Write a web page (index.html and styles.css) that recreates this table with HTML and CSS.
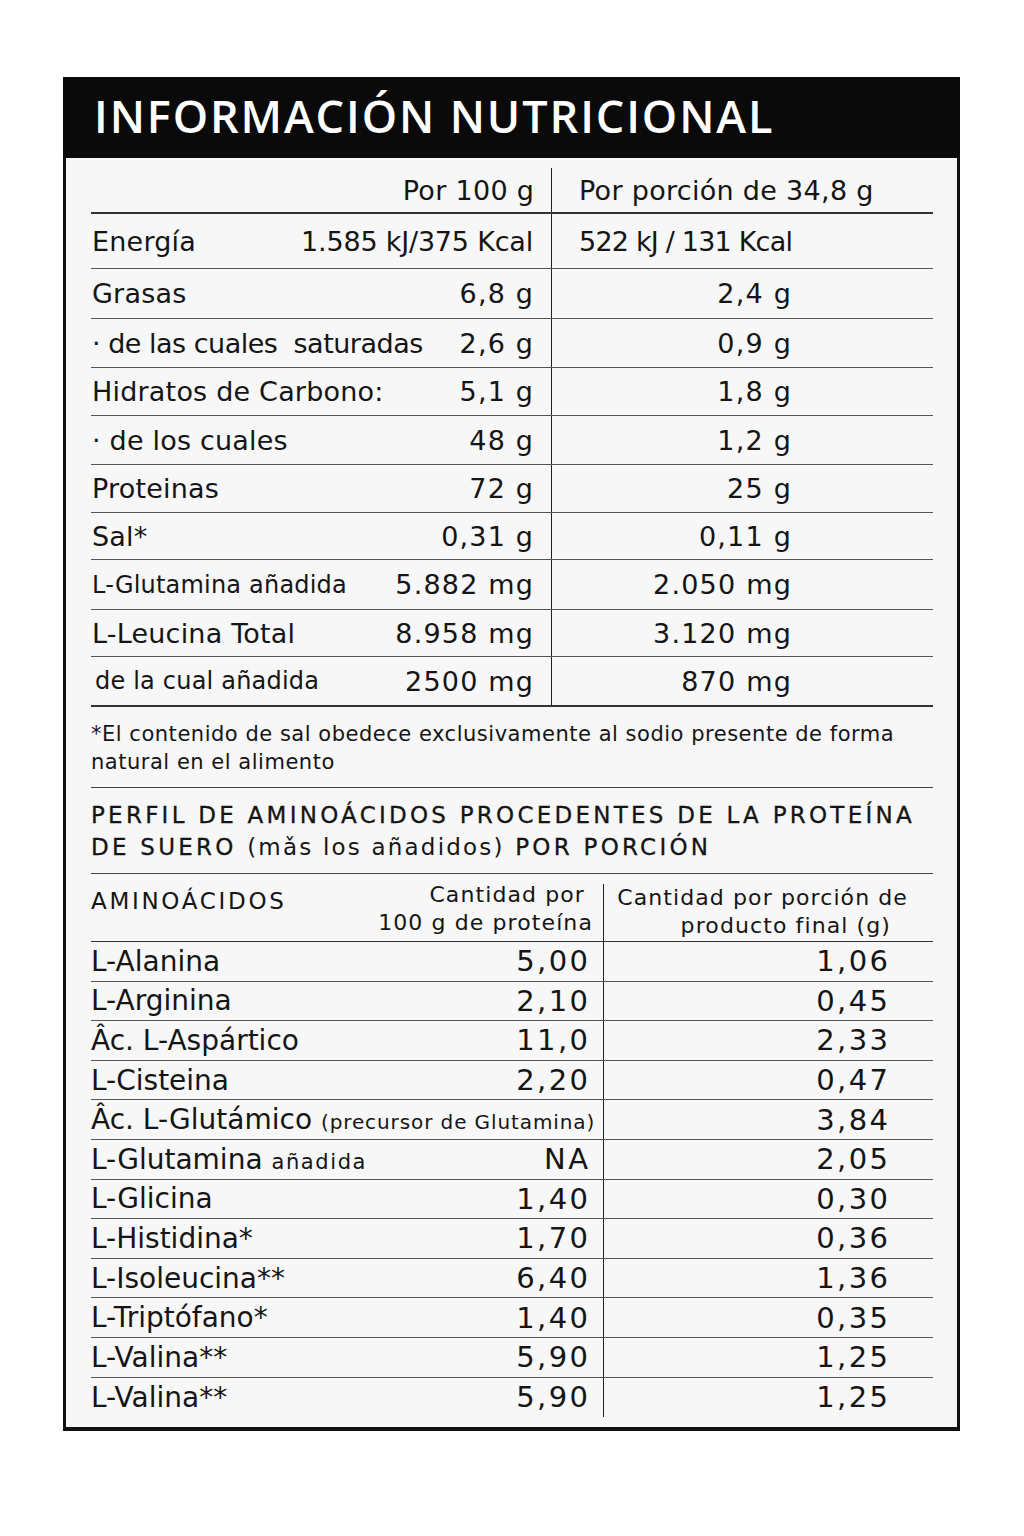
FILE: index.html
```html
<!DOCTYPE html>
<html lang="es">
<head>
<meta charset="utf-8">
<title>Información nutricional</title>
<link rel="stylesheet" href="styles.css">
</head>
<body>
<div class="label">
  <div class="title-bar"><h1>INFORMACIÓN NUTRICIONAL</h1></div>
  <div class="content">
    <div class="nt">
      <div class="row head">
        <div class="c1"><span></span><span class="v">Por 100 g</span></div>
        <div class="c2 left">Por porción de 34,8 g</div>
      </div>
      <div class="row r-first">
        <div class="c1"><span>Energía</span><span class="v tight">1.585 kJ/375 Kcal</span></div>
        <div class="c2 left narrow">522 kJ / 131 Kcal</div>
      </div>
      <div class="row h50">
        <div class="c1"><span>Grasas</span><span class="v">6,8 g</span></div>
        <div class="c2">2,4 g</div>
      </div>
      <div class="row h49">
        <div class="c1"><span class="sat">· de las cuales&nbsp; saturadas</span><span class="v">2,6 g</span></div>
        <div class="c2">0,9 g</div>
      </div>
      <div class="row h48">
        <div class="c1"><span>Hidratos de Carbono:</span><span class="v">5,1 g</span></div>
        <div class="c2">1,8 g</div>
      </div>
      <div class="row h49">
        <div class="c1"><span>· de los cuales</span><span class="v">48 g</span></div>
        <div class="c2">1,2 g</div>
      </div>
      <div class="row h48">
        <div class="c1"><span>Proteinas</span><span class="v">72 g</span></div>
        <div class="c2">25 g</div>
      </div>
      <div class="row h47">
        <div class="c1"><span>Sal*</span><span class="v">0,31 g</span></div>
        <div class="c2">0,11 g</div>
      </div>
      <div class="row sm h50">
        <div class="c1"><span>L-Glutamina añadida</span><span class="v">5.882 mg</span></div>
        <div class="c2">2.050 mg</div>
      </div>
      <div class="row h47">
        <div class="c1"><span>L-Leucina Total</span><span class="v">8.958 mg</span></div>
        <div class="c2">3.120 mg</div>
      </div>
      <div class="row sm last">
        <div class="c1"><span class="ind">de la cual añadida</span><span class="v">2500 mg</span></div>
        <div class="c2">870 mg</div>
      </div>
    </div>
    <p class="note">*El contenido de sal obedece exclusivamente al sodio presente de forma<br>natural en el alimento</p>
    <h2 class="profile">PERFIL DE AMINOÁCIDOS PROCEDENTES DE LA PROTEÍNA<br>DE SUERO <span class="lc">(mǎs los añadidos)</span> POR PORCIÓN</h2>
    <div class="at">
      <div class="arow ahead">
        <div class="a1"><span class="aname">AMINOÁCIDOS</span><span class="av"><span class="l1">Cantidad por</span><br>100 g de proteína</span></div>
        <div class="a2"><span class="h2l">Cantidad por porción de<br><span class="l2">producto final (g)</span></span></div>
      </div>
      <div class="arow"><div class="a1"><span>L-Alanina</span><span class="n">5,00</span></div><div class="a2"><span class="n">1,06</span></div></div>
      <div class="arow"><div class="a1"><span>L-Arginina</span><span class="n">2,10</span></div><div class="a2"><span class="n">0,45</span></div></div>
      <div class="arow"><div class="a1"><span>Âc. L-Aspártico</span><span class="n">11,0</span></div><div class="a2"><span class="n">2,33</span></div></div>
      <div class="arow"><div class="a1"><span>L-Cisteina</span><span class="n">2,20</span></div><div class="a2"><span class="n">0,47</span></div></div>
      <div class="arow"><div class="a1"><span>Âc. L-Glutámico <small class="paren">(precursor de Glutamina)</small></span><span></span></div><div class="a2"><span class="n">3,84</span></div></div>
      <div class="arow"><div class="a1"><span>L-Glutamina <small class="add">añadida</small></span><span class="n">NA</span></div><div class="a2"><span class="n">2,05</span></div></div>
      <div class="arow"><div class="a1"><span>L-Glicina</span><span class="n">1,40</span></div><div class="a2"><span class="n">0,30</span></div></div>
      <div class="arow"><div class="a1"><span>L-Histidina*</span><span class="n">1,70</span></div><div class="a2"><span class="n">0,36</span></div></div>
      <div class="arow"><div class="a1"><span>L-Isoleucina**</span><span class="n">6,40</span></div><div class="a2"><span class="n">1,36</span></div></div>
      <div class="arow"><div class="a1"><span>L-Triptófano*</span><span class="n">1,40</span></div><div class="a2"><span class="n">0,35</span></div></div>
      <div class="arow"><div class="a1"><span>L-Valina**</span><span class="n">5,90</span></div><div class="a2"><span class="n">1,25</span></div></div>
      <div class="arow alast"><div class="a1"><span>L-Valina**</span><span class="n">5,90</span></div><div class="a2"><span class="n">1,25</span></div></div>
    </div>
  </div>
</div>
</body>
</html>
```

FILE: styles.css
```css
html, body {
  margin: 0;
  padding: 0;
  background: #ffffff;
}
body {
  font-family: "DejaVu Sans", "Open Sans", sans-serif;
  color: #151515;
}
.label {
  margin: 77px 0 0 63px;
  width: 897px;
  box-sizing: border-box;
  border: 3px solid #111;
  border-top: 0;
  border-bottom: 4px solid #111;
  background: #f7f7f7;
}
.title-bar {
  background: #0a0a0a;
  height: 81px;
  box-sizing: border-box;
  margin: 0 -3px;
  padding: 16px 0 0 31px;
}
.title-bar h1 {
  margin: 0;
  font-family: "Open Sans", "DejaVu Sans", sans-serif;
  color: #fff;
  font-size: 45px;
  line-height: 45px;
  font-weight: 600;
  letter-spacing: 1.9px;
}
.content {
  padding: 10px 24px 10px 25px;
}
/* nutrition table */
.nt .row {
  display: grid;
  grid-template-columns: 460px 1fr;
  height: 49px;
  border-bottom: 1.5px solid #555;
  font-size: 27px;
  letter-spacing: 0.2px;
  box-sizing: border-box;
  white-space: nowrap;
}
.nt .row.head {
  height: 46px;
  border-bottom: 2px solid #333;
}
.nt .row.r-first { height: 55px; }
.nt .row.h50 { height: 50px; }
.nt .row.h49 { height: 49px; }
.nt .row.h48 { height: 48px; }
.nt .row.h47 { height: 47px; }
.nt .row.last {
  border-bottom: 2px solid #333;
  height: 50px;
}
.nt .c1 {
  display: flex;
  justify-content: space-between;
  align-items: center;
  padding: 0 18px 0 1px;
}
.nt .sat { letter-spacing: -0.5px; }
.nt .v {
  letter-spacing: 1.2px;
  margin-right: -1.2px;
}
.nt .v.tight {
  letter-spacing: -0.2px;
  margin-right: 0;
}
.nt .row.head .v { letter-spacing: 0.3px; }
.nt .c2 {
  display: flex;
  align-items: center;
  justify-content: flex-end;
  padding-right: 141px;
  border-left: 1.5px solid #222;
  letter-spacing: 1.2px;
}
.nt .c2.left {
  justify-content: flex-start;
  padding-left: 27px;
  padding-right: 0;
  letter-spacing: 0.3px;
}
.nt .c2.left.narrow { letter-spacing: -0.8px; }
.nt .row.sm .c1 > span:first-child {
  font-size: 24px;
  letter-spacing: 0.2px;
}
.nt .ind { padding-left: 3px; }
.note {
  margin: 0;
  padding: 13px 0 11px 0;
  font-size: 21px;
  line-height: 28px;
  letter-spacing: 0.52px;
  border-bottom: 1.5px solid #444;
  white-space: nowrap;
}
.profile {
  margin: 0;
  padding: 11px 0 10px 0;
  font-size: 23px;
  line-height: 32px;
  font-weight: 400;
  letter-spacing: 3.25px;
  border-bottom: 1.5px solid #444;
  white-space: nowrap;
  -webkit-text-stroke: 0.3px #151515;
}
.profile .lc {
  letter-spacing: 2.2px;
  -webkit-text-stroke: 0;
}
/* amino table */
.at .arow {
  display: grid;
  grid-template-columns: 512px 1fr;
  height: 39.6px;
  border-bottom: 1.5px solid #555;
  box-sizing: border-box;
  font-size: 28px;
  letter-spacing: 0;
  white-space: nowrap;
}
.at .arow.alast { border-bottom: 0; }
.at .arow.ahead {
  height: 68px;
  font-size: 22px;
  line-height: 28px;
  letter-spacing: 1.1px;
  border-bottom: 1.5px solid #333;
}
.at .a1 {
  display: flex;
  justify-content: space-between;
  align-items: center;
  padding-right: 15px;
}
.at .a2 {
  display: flex;
  align-items: center;
  justify-content: flex-end;
  padding-right: 45px;
  border-left: 1.5px solid #222;
}
.at .n {
  font-size: 29px;
  letter-spacing: 2.4px;
  margin-right: -2.4px;
}
.at .ahead .a1 {
  align-items: flex-start;
  padding-top: 7px;
  padding-right: 10px;
}
.at .ahead .aname {
  font-size: 23px;
  padding-top: 6px;
  letter-spacing: 2.7px;
}
.at .ahead .av { text-align: right; }
.at .ahead .l1 { padding-right: 8px; }
.at .ahead .a2 {
  margin-top: 10px;
  justify-content: flex-end;
  align-items: flex-start;
  text-align: right;
  padding: 0 25px 0 0;
}
.at .ahead .l2 { padding-right: 17px; }
.at small {
  font-size: 20px;
  letter-spacing: 0.9px;
}
.at small.add {
  font-size: 21px;
  letter-spacing: 1.6px;
}
```
